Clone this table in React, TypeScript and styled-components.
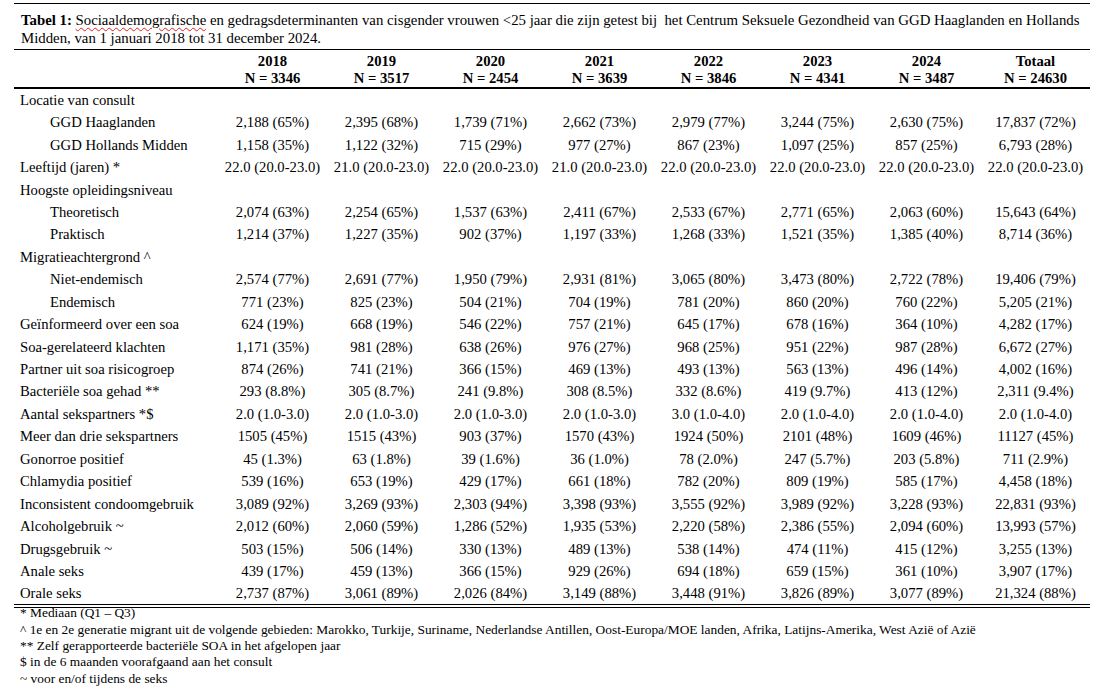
import React from 'react';
import styled, { createGlobalStyle } from 'styled-components';

const GlobalStyle = createGlobalStyle`
  html, body {
    margin: 0;
    padding: 0;
    background: #fff;
  }
  body {
    font-family: 'Liberation Serif', 'Times New Roman', serif;
    color: #000;
  }
`;

const Page = styled.div`
  width: 1102px;
  height: 687px;
  padding: 3px 0 0 14px;
  box-sizing: border-box;
  overflow: hidden;
`;

const Sheet = styled.div`
  width: 1076px;
`;

const Title = styled.div`
  border-top: 1px solid #000;
  border-bottom: 1px solid #000;
  padding: 7px 7px 5px;
  height: 47px;
  box-sizing: border-box;
  font-size: 14.8px;
  line-height: 18px;
  white-space: nowrap;
  b {
    font-weight: bold;
  }
`;

const Squiggle = styled.span`
  text-decoration: underline wavy #e02020;
  text-decoration-thickness: 1px;
  text-underline-offset: 2px;
`;

const Table = styled.table`
  width: 1076px;
  border-collapse: collapse;
  table-layout: fixed;
  font-size: 14.67px;
`;

const HeadRow = styled.tr`
  border-bottom: 2px solid #000;
`;

const HeadCell = styled.th`
  height: 37px;
  padding: 3px 0 0;
  box-sizing: border-box;
  font-weight: bold;
  text-align: center;
  vertical-align: top;
  line-height: 17px;
  white-space: nowrap;
`;

const Row = styled.tr<{ $last?: boolean }>`
  height: 22.45px;
  border-bottom: ${(p) => (p.$last ? '4px double #000' : 'none')};
`;

const LabelCell = styled.td<{ $indent?: boolean }>`
  padding: 0 0 0 ${(p) => (p.$indent ? '36px' : '6px')};
  white-space: nowrap;
  line-height: 22px;
`;

const ValueCell = styled.td`
  padding: 0;
  text-align: center;
  white-space: nowrap;
  line-height: 22px;
`;

const Notes = styled.div`
  margin-top: -3px;
  padding: 0 0 0 6px;
  font-size: 13.4px;
  line-height: 16.4px;
  white-space: nowrap;
`;

const cols = [
  ['2018', '3346'],
  ['2019', '3517'],
  ['2020', '2454'],
  ['2021', '3639'],
  ['2022', '3846'],
  ['2023', '4341'],
  ['2024', '3487'],
  ['Totaal', '24630'],
];

type Line = { label: string; indent?: boolean; values?: string[] };

const iqr = (a: string, b: string) => `${a} (${b})`;

const rows: Line[] = [
  { label: 'Locatie van consult' },
  {
    label: 'GGD Haaglanden',
    indent: true,
    values: ['2,188 (65%)', '2,395 (68%)', '1,739 (71%)', '2,662 (73%)', '2,979 (77%)', '3,244 (75%)', '2,630 (75%)', '17,837 (72%)'],
  },
  {
    label: 'GGD Hollands Midden',
    indent: true,
    values: ['1,158 (35%)', '1,122 (32%)', '715 (29%)', '977 (27%)', '867 (23%)', '1,097 (25%)', '857 (25%)', '6,793 (28%)'],
  },
  {
    label: 'Leeftijd (jaren) *',
    values: ['22.0', '21.0', '22.0', '21.0', '22.0', '22.0', '22.0', '22.0'].map((m) => iqr(m, '20.0-23.0')),
  },
  { label: 'Hoogste opleidingsniveau' },
  {
    label: 'Theoretisch',
    indent: true,
    values: ['2,074 (63%)', '2,254 (65%)', '1,537 (63%)', '2,411 (67%)', '2,533 (67%)', '2,771 (65%)', '2,063 (60%)', '15,643 (64%)'],
  },
  {
    label: 'Praktisch',
    indent: true,
    values: ['1,214 (37%)', '1,227 (35%)', '902 (37%)', '1,197 (33%)', '1,268 (33%)', '1,521 (35%)', '1,385 (40%)', '8,714 (36%)'],
  },
  { label: 'Migratieachtergrond ^' },
  {
    label: 'Niet-endemisch',
    indent: true,
    values: ['2,574 (77%)', '2,691 (77%)', '1,950 (79%)', '2,931 (81%)', '3,065 (80%)', '3,473 (80%)', '2,722 (78%)', '19,406 (79%)'],
  },
  {
    label: 'Endemisch',
    indent: true,
    values: ['771 (23%)', '825 (23%)', '504 (21%)', '704 (19%)', '781 (20%)', '860 (20%)', '760 (22%)', '5,205 (21%)'],
  },
  {
    label: 'Geïnformeerd over een soa',
    values: ['624 (19%)', '668 (19%)', '546 (22%)', '757 (21%)', '645 (17%)', '678 (16%)', '364 (10%)', '4,282 (17%)'],
  },
  {
    label: 'Soa-gerelateerd klachten',
    values: ['1,171 (35%)', '981 (28%)', '638 (26%)', '976 (27%)', '968 (25%)', '951 (22%)', '987 (28%)', '6,672 (27%)'],
  },
  {
    label: 'Partner uit soa risicogroep',
    values: ['874 (26%)', '741 (21%)', '366 (15%)', '469 (13%)', '493 (13%)', '563 (13%)', '496 (14%)', '4,002 (16%)'],
  },
  {
    label: 'Bacteriële soa gehad **',
    values: ['293 (8.8%)', '305 (8.7%)', '241 (9.8%)', '308 (8.5%)', '332 (8.6%)', '419 (9.7%)', '413 (12%)', '2,311 (9.4%)'],
  },
  {
    label: 'Aantal sekspartners *$',
    values: [
      iqr('2.0', '1.0-3.0'),
      iqr('2.0', '1.0-3.0'),
      iqr('2.0', '1.0-3.0'),
      iqr('2.0', '1.0-3.0'),
      iqr('3.0', '1.0-4.0'),
      iqr('2.0', '1.0-4.0'),
      iqr('2.0', '1.0-4.0'),
      iqr('2.0', '1.0-4.0'),
    ],
  },
  {
    label: 'Meer dan drie sekspartners',
    values: ['1505 (45%)', '1515 (43%)', '903 (37%)', '1570 (43%)', '1924 (50%)', '2101 (48%)', '1609 (46%)', '11127 (45%)'],
  },
  {
    label: 'Gonorroe positief',
    values: ['45 (1.3%)', '63 (1.8%)', '39 (1.6%)', '36 (1.0%)', '78 (2.0%)', '247 (5.7%)', '203 (5.8%)', '711 (2.9%)'],
  },
  {
    label: 'Chlamydia positief',
    values: ['539 (16%)', '653 (19%)', '429 (17%)', '661 (18%)', '782 (20%)', '809 (19%)', '585 (17%)', '4,458 (18%)'],
  },
  {
    label: 'Inconsistent condoomgebruik',
    values: ['3,089 (92%)', '3,269 (93%)', '2,303 (94%)', '3,398 (93%)', '3,555 (92%)', '3,989 (92%)', '3,228 (93%)', '22,831 (93%)'],
  },
  {
    label: 'Alcoholgebruik ~',
    values: ['2,012 (60%)', '2,060 (59%)', '1,286 (52%)', '1,935 (53%)', '2,220 (58%)', '2,386 (55%)', '2,094 (60%)', '13,993 (57%)'],
  },
  {
    label: 'Drugsgebruik ~',
    values: ['503 (15%)', '506 (14%)', '330 (13%)', '489 (13%)', '538 (14%)', '474 (11%)', '415 (12%)', '3,255 (13%)'],
  },
  {
    label: 'Anale seks',
    values: ['439 (17%)', '459 (13%)', '366 (15%)', '929 (26%)', '694 (18%)', '659 (15%)', '361 (10%)', '3,907 (17%)'],
  },
  {
    label: 'Orale seks',
    values: ['2,737 (87%)', '3,061 (89%)', '2,026 (84%)', '3,149 (88%)', '3,448 (91%)', '3,826 (89%)', '3,077 (89%)', '21,324 (88%)'],
  },
];

const notes = [
  '* Mediaan (Q1 – Q3)',
  '^ 1e en 2e generatie migrant uit de volgende gebieden: Marokko, Turkije, Suriname, Nederlandse Antillen, Oost-Europa/MOE landen, Afrika, Latijns-Amerika, West Azië of Azië',
  '** Zelf gerapporteerde bacteriële SOA in het afgelopen jaar',
  '$ in de 6 maanden voorafgaand aan het consult',
  '~ voor en/of tijdens de seks',
];

export default function App() {
  return (
    <>
      <GlobalStyle />
      <Page>
        <Sheet>
          <Title>
            <b>Tabel 1:</b> <Squiggle>Sociaaldemografische</Squiggle> en gedragsdeterminanten van cisgender vrouwen
            &lt;25 jaar die zijn getest bij{'\u00a0'} het Centrum Seksuele Gezondheid van GGD Haaglanden en Hollands
            <br />
            Midden, van 1 januari 2018 tot 31 december 2024.
          </Title>
          <Table>
            <colgroup>
              <col style={{ width: 204 }} />
              {cols.map((c) => (
                <col key={c[0]} style={{ width: 109 }} />
              ))}
            </colgroup>
            <thead>
              <HeadRow>
                <HeadCell />
                {cols.map(([year, n]) => (
                  <HeadCell key={year}>
                    {year}
                    <br />N = {n}
                  </HeadCell>
                ))}
              </HeadRow>
            </thead>
            <tbody>
              {rows.map((r, i) => (
                <Row key={r.label} $last={i === rows.length - 1}>
                  <LabelCell $indent={r.indent}>{r.label}</LabelCell>
                  {cols.map((c, j) => (
                    <ValueCell key={c[0]}>{r.values ? r.values[j] : ''}</ValueCell>
                  ))}
                </Row>
              ))}
            </tbody>
          </Table>
          <Notes>
            {notes.map((n) => (
              <div key={n}>{n}</div>
            ))}
          </Notes>
        </Sheet>
      </Page>
    </>
  );
}
